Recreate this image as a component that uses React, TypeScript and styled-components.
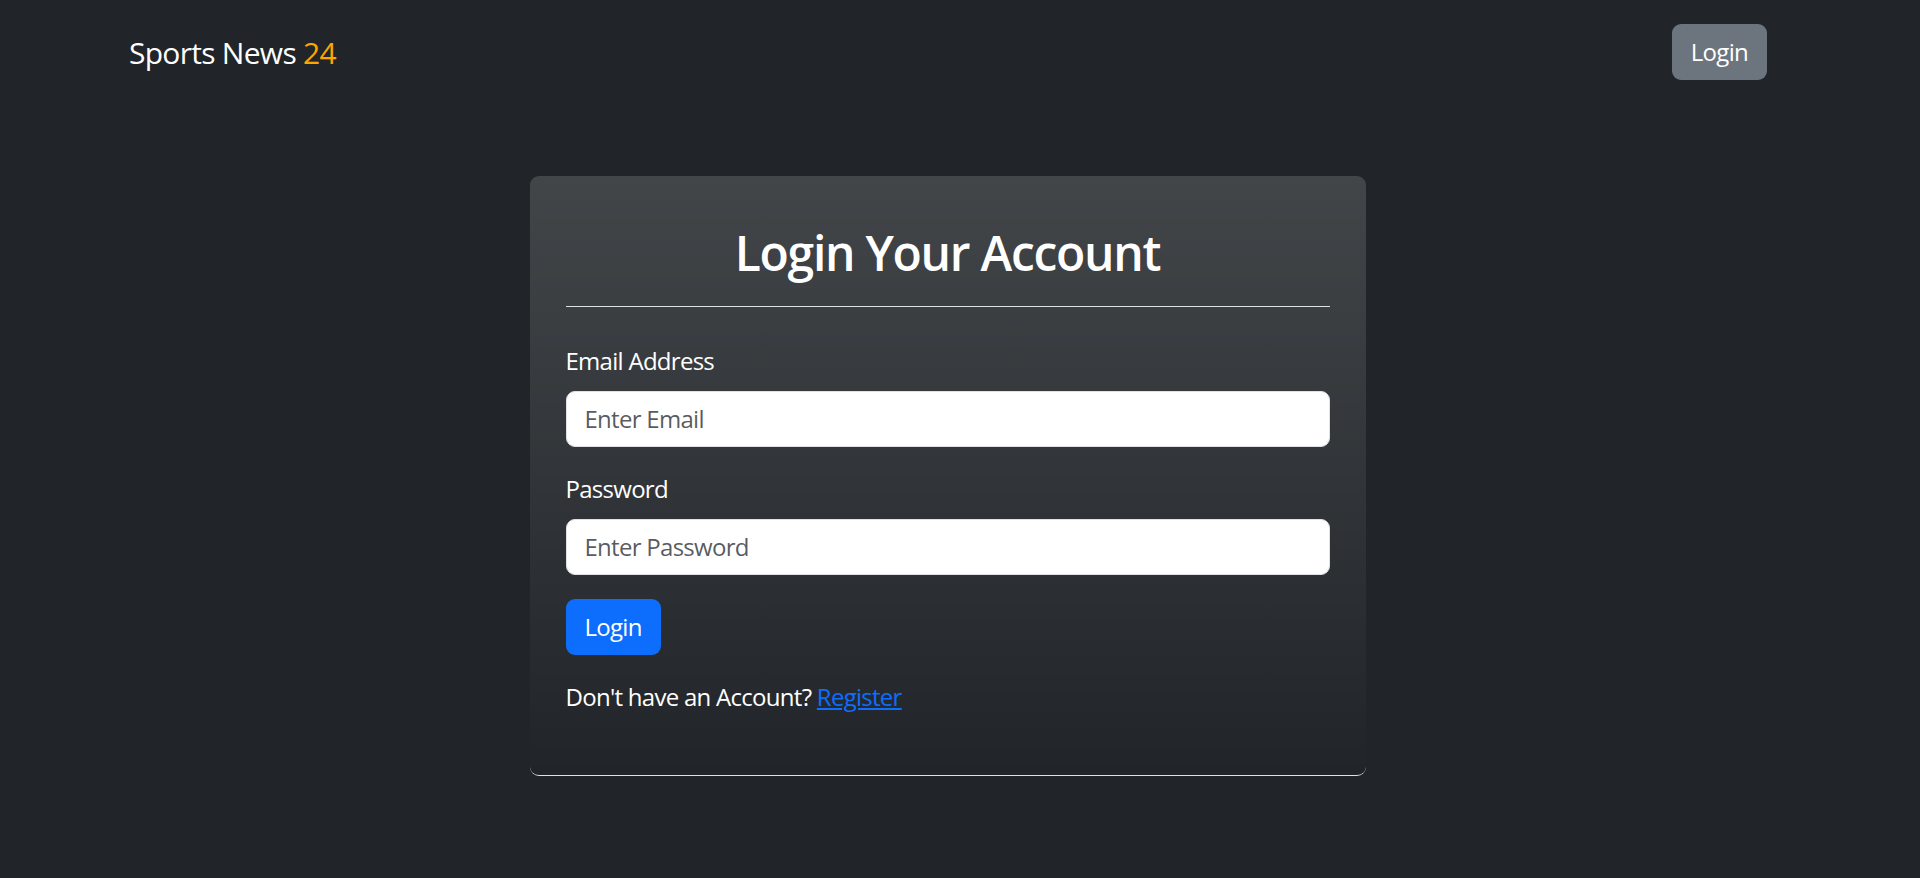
import React from 'react';
import styled, { createGlobalStyle } from 'styled-components';

const GlobalStyle = createGlobalStyle`
  * {
    box-sizing: border-box;
  }

  body {
    margin: 0;
    background: #212529;
    color: #fff;
    font-family: 'Open Sans', 'Noto Sans', sans-serif;
    font-size: 24px;
    line-height: 1.5;
    letter-spacing: -0.72px;
  }
`;

// the reference page had a 25px scrollbar, so everything sits left of true centre
const Navbar = styled.nav`
  display: flex;
  align-items: center;
  justify-content: space-between;
  padding: 24px 153px 24px 129px;
`;

const Brand = styled.a`
  font-size: 30px;
  line-height: 45px;
  color: #fff;
  text-decoration: none;
`;

const BrandNumber = styled.span`
  color: #ffa500;
`;

const NavButton = styled.button`
  height: 56px;
  padding: 0 19px;
  border: none;
  border-radius: 9px;
  background: #6c757d;
  color: #fff;
  font: inherit;
  letter-spacing: inherit;
  line-height: 36px;
  cursor: pointer;
`;

const Main = styled.main`
  display: flex;
  justify-content: center;
  padding: 72px 25px 210px 0;
`;

const Card = styled.section`
  width: 836px;
  padding: 36px;
  border-radius: 9px;
  border-bottom: 1px solid #dee2e6;
  background: linear-gradient(180deg, rgba(255, 255, 255, 0.15), rgba(255, 255, 255, 0)) #212529;
`;

const Title = styled.h2`
  margin: 12px 0 0;
  font-size: 48px;
  font-weight: 600;
  line-height: 1.2;
  letter-spacing: -1.27px;
  text-align: center;
`;

const Divider = styled.hr`
  margin: 24px 0 36px;
  border: none;
  border-top: 1px solid #dee2e6;
`;

const Field = styled.div`
  margin-bottom: 24px;
`;

const Label = styled.label`
  display: block;
  margin-bottom: 12px;
`;

const Input = styled.input`
  display: block;
  width: 100%;
  height: 56px;
  padding: 0 18px;
  border: 1.5px solid #dee2e6;
  border-radius: 9px;
  background: #fff;
  color: #212529;
  font: inherit;
  letter-spacing: inherit;

  &::placeholder {
    color: rgba(33, 37, 41, 0.75);
  }
`;

const SubmitButton = styled.button`
  height: 56px;
  padding: 0 19px;
  border: none;
  border-radius: 9px;
  background: #0d6efd;
  color: #fff;
  font: inherit;
  letter-spacing: inherit;
  line-height: 36px;
  cursor: pointer;
`;

const Footnote = styled.p`
  margin: 24px 0;
`;

const RegisterLink = styled.a`
  color: #0d6efd;
  text-decoration: underline;
`;

const App = () => {
  return (
    <>
      <GlobalStyle />
      <Navbar>
        <Brand href="#">
          Sports News <BrandNumber>24</BrandNumber>
        </Brand>
        <NavButton>Login</NavButton>
      </Navbar>
      <Main>
        <Card>
          <Title>Login Your Account</Title>
          <Divider />
          <form onSubmit={(e) => e.preventDefault()}>
            <Field>
              <Label htmlFor="email">Email Address</Label>
              <Input id="email" type="email" placeholder="Enter Email" />
            </Field>
            <Field>
              <Label htmlFor="password">Password</Label>
              <Input id="password" type="password" placeholder="Enter Password" />
            </Field>
            <SubmitButton type="submit">Login</SubmitButton>
          </form>
          <Footnote>
            Don't have an Account? <RegisterLink href="#">Register</RegisterLink>
          </Footnote>
        </Card>
      </Main>
    </>
  );
};

export default App;
